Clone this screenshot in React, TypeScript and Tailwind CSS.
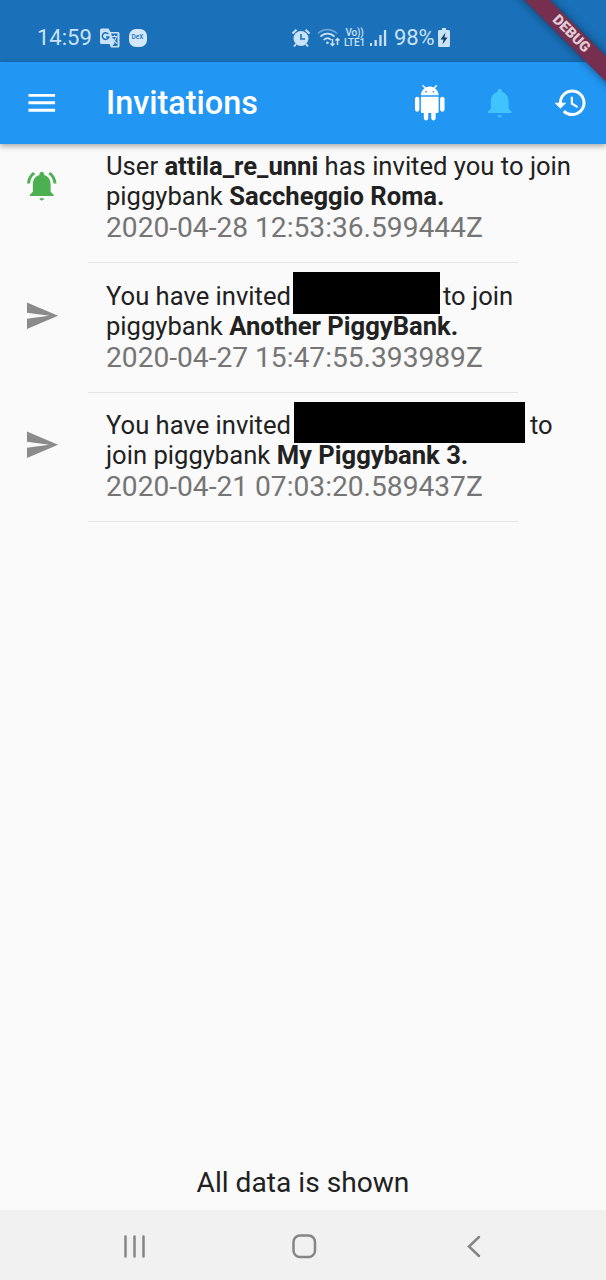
import type { ReactNode } from "react";

const paths = {
  menu: "M3 18h18v-2H3v2zm0-5h18v-2H3v2zm0-7v2h18V6H3z",
  android:
    "M6 18c0 .55.45 1 1 1h1v3.5c0 .83.67 1.5 1.5 1.5s1.5-.67 1.5-1.5V19h2v3.5c0 .83.67 1.5 1.5 1.5s1.5-.67 1.5-1.5V19h1c.55 0 1-.45 1-1V8H6v10zM3.5 8C2.67 8 2 8.67 2 9.5v7c0 .83.67 1.5 1.5 1.5S5 17.33 5 16.5v-7C5 8.67 4.33 8 3.5 8zm17 0c-.83 0-1.5.67-1.5 1.5v7c0 .83.67 1.5 1.5 1.5s1.5-.67 1.5-1.5v-7c0-.83-.67-1.5-1.5-1.5zm-4.97-5.84l1.3-1.3c.2-.2.2-.51 0-.71-.2-.2-.51-.2-.71 0l-1.48 1.48C13.85 1.23 12.95 1 12 1c-.96 0-1.86.23-2.66.63L7.85.15c-.2-.2-.51-.2-.71 0-.2.2-.2.51 0 .71l1.31 1.31C6.97 3.26 6 5.01 6 7h12c0-1.99-.97-3.75-2.47-4.84zM10 5H9V4h1v1zm5 0h-1V4h1v1z",
  bell: "M12 22c.85 0 1.5-.65 1.5-1.5h-3c0 .85.65 1.5 1.5 1.5zm6-6v-5c0-3.07-1.64-5.64-4.5-6.32V4c0-.83-.67-1.5-1.5-1.5s-1.5.67-1.5 1.5v.68C7.63 5.36 6 7.92 6 11v5l-2 2v1h16v-1l-2-2z",
  bellActive:
    "M7.58 4.08L6.15 2.65C3.75 4.48 2.17 7.3 2.03 10.5h2c.15-2.65 1.51-4.97 3.55-6.42zm12.39 6.42h2c-.15-3.2-1.73-6.02-4.12-7.85l-1.42 1.43c2.02 1.45 3.39 3.77 3.54 6.42zM18 11c0-3.07-1.64-5.64-4.5-6.32V4c0-.83-.67-1.5-1.5-1.5s-1.5.67-1.5 1.5v.68C7.63 5.36 6 7.92 6 11v5l-2 2v1h16v-1l-2-2v-5zm-6 11c.85 0 1.5-.65 1.500-1.500h-3c0 .85.65 1.500 1.500 1.500z",
  history:
    "M13 3c-4.97 0-9 4.03-9 9H1l3.89 3.89.07.14L9 12H6c0-3.87 3.13-7 7-7s7 3.13 7 7-3.13 7-7 7c-1.93 0-3.68-.79-4.94-2.06l-1.42 1.42C8.27 19.99 10.51 21 13 21c4.97 0 9-4.03 9-9s-4.03-9-9-9zm-1 5v5l4.28 2.54.72-1.21-3.5-2.08V8H12z",
  send: "M2.01 21L23 12 2.01 3 2 10l15 2-15 2z",
};

function Icon({ name, className = "" }: { name: keyof typeof paths; className?: string }) {
  return (
    <svg viewBox="0 0 24 24" fill="currentColor" className={`size-[35.5px] shrink-0 ${className}`}>
      <path d={paths[name]} />
    </svg>
  );
}

function StatusBar() {
  return (
    <div className="flex h-[62px] items-center bg-[#1a70b9] pt-[13px] pl-[37px] text-[#c9e2f8]">
      <span className="w-[62.5px] text-[22px] leading-none">14:59</span>
      <svg viewBox="0 0 20 20" className="size-5">
        <path d="M1.5 0.5h7l2 3.5h7.5a1.5 1.5 0 0 1 1.5 1.5v12.5a1.5 1.5 0 0 1-1.5 1.5h-7l-1.5-3.5h-8a1.5 1.5 0 0 1-1.5-1.5v-13z" fill="currentColor" />
        <path d="M11 5.5h6.5v12.5h-5l2-2.5z" fill="#1a70b9" />
        <path d="M11.5 8.5h6M14.5 7v1.5M16.5 8.5c-.5 3-2 4.5-4 6M13 10.5c1 2.500 2.500 4 4 5" stroke="currentColor" strokeWidth="1.1" fill="none" />
        <path d="M8.200 6a3.300 3.300 0 1 0 .6 3H6" stroke="#1a70b9" strokeWidth="1.5" fill="none" />
      </svg>
      <span className="ml-[9px] flex size-[18px] items-center justify-center rounded-[7px] bg-[#d3e7fa] text-[6.5px] font-medium text-[#1a70b9]">DeX</span>
      <svg viewBox="0 0 20 20" className="ml-[144.5px] size-5" fill="none" stroke="currentColor">
        <circle cx="10" cy="10.5" r="7.5" fill="currentColor" stroke="none" />
        <path d="M1.5 5.5 5.5 1.7M18.5 5.5 14.5 1.7M5 16l-2 2.5M15 16l2 2.5" strokeWidth="2" />
        <path d="M10 6v5h4" stroke="#1a70b9" strokeWidth="1.6" />
      </svg>
      <svg viewBox="0 0 24 20" className="ml-[6px] h-5 w-6" fill="none" stroke="currentColor" strokeWidth="1.7">
        <path d="M1 5.5c5.5-5.3 13.5-5.3 19 0" opacity=".45" />
        <path d="M3.5 8.7c4-4 10-4 14 0M6.7 12c2.3-2.2 5.3-2.2 7.6 0" />
        <circle cx="10.5" cy="14.7" r="1.3" fill="currentColor" stroke="none" />
        <path d="M15.5 11v6.5m-2-2 2 2 2-2M20.5 17v-6.5m-2 2 2-2 2 2" strokeWidth="1.5" />
      </svg>
      <span className="ml-[2px] flex w-[23px] flex-col items-center text-[10px] leading-[10px] font-medium tracking-[-0.2px]">
        <span className="h-[10px]">Vo))</span>
        <span className="h-[10px]">LTE1</span>
      </span>
      <svg viewBox="0 0 17 18" className="ml-[4px] h-[18px] w-[17px]" fill="currentColor">
        <path d="M0 14h2v3H0zM4.5 11h2.3v6H4.5zM9.3 6h2.3v11H9.3zM13.9 1h2.3v16h-2.3z" />
      </svg>
      <span className="ml-[7px] w-[43px] text-[22px] leading-none tracking-[-0.1px]">98%</span>
      <svg viewBox="0 0 12 19" className="ml-[1px] h-[19px] w-3">
        <path d="M4 0h4v2h2.5A1.5 1.5 0 0 1 12 3.5v14a1.5 1.5 0 0 1-1.5 1.5h-9A1.5 1.5 0 0 1 0 17.5v-14A1.5 1.5 0 0 1 1.5 2H4z" fill="currentColor" />
        <path d="M7.5 4.5 2.5 11.5h3l-1 5 5-7h-3z" fill="#173f66" />
      </svg>
    </div>
  );
}

function Invitation({ icon, date, children }: { icon: ReactNode; date: string; children: ReactNode }) {
  return (
    <li className="h-[129.6px]">
      <div className="flex h-[118px]">
        <div className="w-[106px] shrink-0 pt-[24px] pl-[23.5px]">{icon}</div>
        <div className="pt-[7px] whitespace-nowrap">
          <div className="text-[25.6px] leading-[30px] text-[#212121]">{children}</div>
          <div className="mt-[1.3px] text-[28.15px] leading-[32px] text-[#757575]">{date}</div>
        </div>
      </div>
      <div className="mx-[88px] h-px bg-[#e4e4e4]" />
    </li>
  );
}

export default function App() {
  return (
    <div className="relative flex h-[1280px] w-[606px] flex-col overflow-hidden bg-[#fafafa] font-['Roboto',sans-serif]">
      <StatusBar />
      <header className="flex h-[82px] shrink-0 items-center bg-[#2196f3] pl-[23.5px] text-white shadow-[0_2px_6px_rgba(0,0,0,0.35)]">
        <Icon name="menu" />
        <h1 className="ml-[47px] w-[305.5px] text-[32.4px] leading-none font-medium">Invitations</h1>
        <Icon name="android" />
        <Icon name="bell" className="ml-[35px] text-[#40c4ff]" />
        <Icon name="history" className="ml-[35.5px]" />
      </header>
      <ul className="grow">
        <Invitation icon={<Icon name="bellActive" className="text-[#4caf50]" />} date="2020-04-28 12:53:36.599444Z">
          <p>User <b>attila_re_unni</b> has invited you to join</p>
          <p>piggybank <b>Saccheggio Roma.</b></p>
        </Invitation>
        <Invitation icon={<Icon name="send" className="text-[#8b8b8b]" />} date="2020-04-27 15:47:55.393989Z">
          <p className="flex h-[30px] items-center">
            <span className="w-[187px]">You have invited</span>
            <span className="-mt-[6px] h-[42px] w-[147px] shrink-0 bg-black" />
            <span className="ml-[3px]">to join</span>
          </p>
          <p>piggybank <b>Another PiggyBank.</b></p>
        </Invitation>
        <Invitation icon={<Icon name="send" className="text-[#8b8b8b]" />} date="2020-04-21 07:03:20.589437Z">
          <p className="flex h-[30px] items-center">
            <span className="w-[188px]">You have invited</span>
            <span className="-mt-[6px] h-[41px] w-[231px] shrink-0 bg-black" />
            <span className="ml-[5px]">to</span>
          </p>
          <p>join piggybank <b>My Piggybank 3.</b></p>
        </Invitation>
      </ul>
      <p className="pb-[11px] text-center text-[28.15px] leading-[33px] text-[#212121]">All data is shown</p>
      <nav className="flex h-[70px] shrink-0 bg-[#f1f1f1] text-[#858585]">
        <svg viewBox="0 0 606 70" className="h-[70px] w-[606px]" fill="none" stroke="currentColor" strokeWidth="2.5" strokeLinecap="round">
          <path d="M125.5 26.5v20M134.5 26.5v20M143.5 26.5v20" />
          <rect x="293.5" y="25.5" width="21.5" height="21.5" rx="6.5" />
          <path d="M479 27 469 36.5l10 9.5" />
        </svg>
      </nav>
      <div className="absolute top-[25px] right-[-60px] flex h-[18px] w-[190px] rotate-45 items-center justify-center bg-[#762f4e] text-[14.5px] font-black text-[#e2ccd6] shadow-[0_0_9px_rgba(0,0,0,0.5)]">
        DEBUG
      </div>
    </div>
  );
}
